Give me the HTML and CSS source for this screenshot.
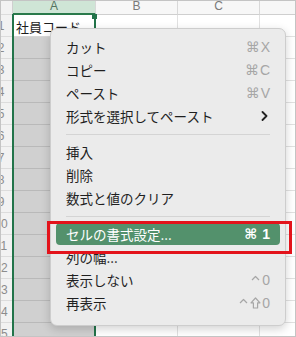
FILE: index.html
```html
<!DOCTYPE html>
<html lang="ja">

<head>
	<meta charset="UTF-8">
	<meta name="viewport" content="width=device-width, initial-scale=1.0">
	<title>セルの書式設定</title>
	<link rel="stylesheet" href="styles.css">
</head>

<body>
	<div class="frame">
		<div class="sheet">
			<div class="row head">
				<div class="rh"></div>
				<div class="ch sel">A</div>
				<div class="ch">B</div>
				<div class="ch">C</div>
				<div class="ch">D</div>
			</div>
			<div class="row">
				<div class="rh">1</div>
				<div class="cell a active">社員コード</div>
				<div class="cell"></div>
				<div class="cell"></div>
				<div class="cell"></div>
			</div>
			<div class="row"><div class="rh">2</div><div class="cell a"></div><div class="cell"></div><div class="cell"></div><div class="cell"></div></div>
			<div class="row"><div class="rh">3</div><div class="cell a"></div><div class="cell"></div><div class="cell"></div><div class="cell"></div></div>
			<div class="row"><div class="rh">4</div><div class="cell a"></div><div class="cell"></div><div class="cell"></div><div class="cell"></div></div>
			<div class="row"><div class="rh">5</div><div class="cell a"></div><div class="cell"></div><div class="cell"></div><div class="cell"></div></div>
			<div class="row"><div class="rh">6</div><div class="cell a"></div><div class="cell"></div><div class="cell"></div><div class="cell"></div></div>
			<div class="row"><div class="rh">7</div><div class="cell a"></div><div class="cell"></div><div class="cell"></div><div class="cell"></div></div>
			<div class="row"><div class="rh">8</div><div class="cell a"></div><div class="cell"></div><div class="cell"></div><div class="cell"></div></div>
			<div class="row"><div class="rh">9</div><div class="cell a"></div><div class="cell"></div><div class="cell"></div><div class="cell"></div></div>
			<div class="row"><div class="rh">10</div><div class="cell a"></div><div class="cell"></div><div class="cell"></div><div class="cell"></div></div>
			<div class="row"><div class="rh">11</div><div class="cell a"></div><div class="cell"></div><div class="cell"></div><div class="cell"></div></div>
			<div class="row"><div class="rh">12</div><div class="cell a"></div><div class="cell"></div><div class="cell"></div><div class="cell"></div></div>
			<div class="row"><div class="rh">13</div><div class="cell a"></div><div class="cell"></div><div class="cell"></div><div class="cell"></div></div>
			<div class="row"><div class="rh">14</div><div class="cell a"></div><div class="cell"></div><div class="cell"></div><div class="cell"></div></div>
			<div class="row"><div class="rh">15</div><div class="cell a"></div><div class="cell"></div><div class="cell"></div><div class="cell"></div></div>
		</div>

		<!-- column A selection -->
		<div class="selbox"></div>
		<div class="handle"></div>

		<!-- context menu -->
		<div class="menu">
			<div class="item"><span>カット</span><span class="key"><span class="sym">⌘</span>X</span></div>
			<div class="item"><span>コピー</span><span class="key"><span class="sym">⌘</span>C</span></div>
			<div class="item"><span>ペースト</span><span class="key"><span class="sym">⌘</span>V</span></div>
			<div class="item"><span>形式を選択してペースト</span>
				<svg class="chev" width="7" height="10" viewBox="0 0 7 10"><polyline points="1.5,1 5.5,5 1.5,9" fill="none" stroke="#222" stroke-width="1.8" stroke-linecap="round" stroke-linejoin="round"/></svg>
			</div>
			<div class="sep"></div>
			<div class="item"><span>挿入</span></div>
			<div class="item"><span>削除</span></div>
			<div class="item"><span>数式と値のクリア</span></div>
			<div class="sep"></div>
			<div class="item hl"><span>セルの書式設定...</span><span class="key"><span class="sym">⌘</span> 1</span></div>
			<div class="item"><span>列の幅...</span></div>
			<div class="item"><span>表示しない</span>
				<span class="key">
					<svg class="ctrl" width="9" height="12" viewBox="0 0 9 12"><polyline points="1,6 4.5,2.5 8,6" fill="none" stroke="#a6a6a6" stroke-width="1.2" stroke-linejoin="round"/></svg>0</span>
			</div>
			<div class="item"><span>再表示</span>
				<span class="key">
					<svg class="ctrl" width="9" height="12" viewBox="0 0 9 12"><polyline points="1,6 4.5,2.5 8,6" fill="none" stroke="#a6a6a6" stroke-width="1.2" stroke-linejoin="round"/></svg>
					<svg class="shift" width="11" height="12" viewBox="0 0 11 12"><polygon points="5.5,1 10,5.8 7.6,5.8 7.6,11 3.4,11 3.4,5.8 1,5.8" fill="none" stroke="#a6a6a6" stroke-width="1.2" stroke-linejoin="round"/></svg>0</span>
			</div>
		</div>

		<div class="callout"></div>
	</div>
</body>

</html>
```

FILE: styles.css
```css
html,
body {
	margin: 0;
	padding: 0;
	background-color: white;
}

.frame {
	position: relative;
	box-sizing: border-box;
	width: 296px;
	height: 337px;
	border: 1px solid #c4c4c4;
	overflow: hidden;
	font-family: "Noto Sans CJK JP", sans-serif;
	color: #1d1d1d;
}

.sheet {
	margin-left: -11px;
}

.row {
	display: grid;
	grid-template-columns: 23px 83px 82px 82px 82px;
	height: 22px;
}

.row.head {
	height: 14px;
}

.rh {
	box-sizing: border-box;
	background-color: #f2f2f2;
	border-right: 1px solid #cfcfcf;
	border-bottom: 1px solid #dcdcdc;
	font-family: "Liberation Sans", sans-serif;
	font-size: 12px;
	line-height: 22px;
	color: #8c8c8c;
	text-align: center;
	overflow: hidden;
}

.ch {
	box-sizing: border-box;
	background-color: #f7f7f7;
	border-right: 1px solid #d8d8d8;
	border-bottom: 1px solid #cfcfcf;
	font-family: "Liberation Sans", sans-serif;
	font-size: 12px;
	line-height: 10px;
	color: #7a7a7a;
	text-align: center;
	overflow: hidden;
}

.ch.sel {
	background-color: #cfe5d6;
	color: #55735f;
	border-bottom: 2px solid #2a7a4b;
}

.cell {
	box-sizing: border-box;
	border-right: 1px solid #e1e1e1;
	border-bottom: 1px solid #e1e1e1;
	overflow: hidden;
	white-space: nowrap;
}

.cell.a {
	background-color: #d0d0d0;
	border-bottom-color: #b9b9b9;
}

.cell.active {
	background-color: white;
	border-bottom-color: #d6d6d6;
	font-size: 13px;
	line-height: 24px;
	padding-left: 3px;
}

.selbox {
	position: absolute;
	left: 11px;
	top: 13px;
	width: 84px;
	bottom: -2px;
	box-sizing: border-box;
	border-left: 2px solid #22744a;
	border-right: 2px solid #22744a;
}

.handle {
	position: absolute;
	left: 91px;
	top: 13px;
	width: 5px;
	height: 5px;
	background-color: #22744a;
}

.menu {
	position: absolute;
	left: 49px;
	top: 27px;
	width: 236px;
	height: 298px;
	box-sizing: border-box;
	padding: 6px 0 3px;
	background-color: #ebebeb;
	border: 1px solid #cdcdcd;
	border-radius: 7px;
	box-shadow: 0 3px 10px rgba(0, 0, 0, 0.18);
}

.item {
	display: flex;
	align-items: center;
	justify-content: space-between;
	height: 22px;
	margin: 1px 5px;
	padding: 0 10px;
	border-radius: 4px;
	font-size: 13.5px;
	color: #1f1f1f;
}

.key {
	font-family: "Liberation Sans", sans-serif;
	font-size: 14px;
	color: #a6a6a6;
	display: flex;
	align-items: center;
	white-space: pre;
}

.sym {
	font-family: "DejaVu Sans", sans-serif;
	font-size: 14px;
	margin-right: 1px;
}

.ctrl {
	margin-right: 2px;
}

.shift {
	margin-right: 1px;
}

.chev {
	margin-right: 2px;
}

.sep {
	height: 12px;
	display: flex;
	align-items: center;
	margin: 0 15px;
}

.sep::after {
	content: "";
	flex: 1;
	height: 1px;
	background-color: #d4d4d4;
}

.item.hl {
	background-color: #53916c;
	color: white;
}

.item.hl .key {
	color: white;
	font-weight: bold;
}

.callout {
	position: absolute;
	left: 46px;
	top: 220px;
	width: 245px;
	height: 33px;
	box-sizing: border-box;
	border: 3px solid #e3131b;
}
```
